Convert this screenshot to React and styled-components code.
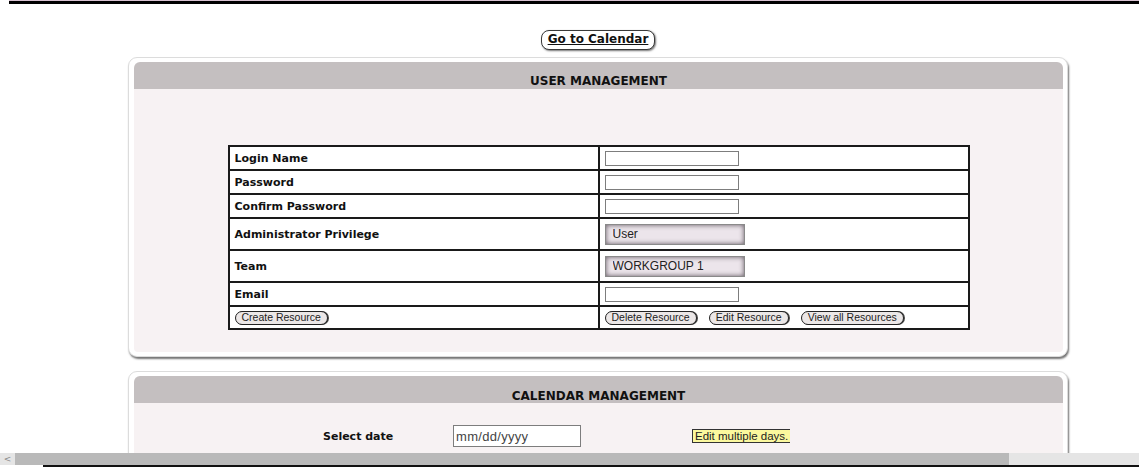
import styled, { createGlobalStyle } from "styled-components";

const GlobalStyle = createGlobalStyle`
  html, body {
    margin: 0;
    padding: 0;
    overflow: hidden;
    background: #ffffff;
  }
  body {
    font-family: "DejaVu Sans", Verdana, sans-serif;
    color: #111111;
  }
`;

const userRows = [
  { label: "Login Name", kind: "text" },
  { label: "Password", kind: "text" },
  { label: "Confirm Password", kind: "text" },
  { label: "Administrator Privilege", kind: "select", options: ["User", "Administrator"] },
  { label: "Team", kind: "select", options: ["WORKGROUP 1", "WORKGROUP 2"] },
  { label: "Email", kind: "text" },
];

export default function App() {
  return (
    <>
      <GlobalStyle />
      <Page>
        <TopRule />
        <CalendarLink href="#">Go to Calendar</CalendarLink>

        <Panel>
          <PanelHeader $pad={12}>USER MANAGEMENT</PanelHeader>
          <PanelBody $top={56} $bottom={22}>
            <FormTable>
              <tbody>
                {userRows.map((row) => (
                  <tr key={row.label}>
                    <LabelCell $tall={row.kind === "select"}>{row.label}</LabelCell>
                    <FieldCell $tall={row.kind === "select"}>
                      {row.kind === "select" ? (
                        <Select defaultValue={row.options[0]}>
                          {row.options.map((o) => (
                            <option key={o}>{o}</option>
                          ))}
                        </Select>
                      ) : (
                        <TextInput type="text" />
                      )}
                    </FieldCell>
                  </tr>
                ))}
                <tr>
                  <ActionCell>
                    <PillButton>Create Resource</PillButton>
                  </ActionCell>
                  <ActionCell>
                    <ButtonGroup>
                      <PillButton>Delete Resource</PillButton>
                      <PillButton>Edit Resource</PillButton>
                      <PillButton>View all Resources</PillButton>
                    </ButtonGroup>
                  </ActionCell>
                </tr>
              </tbody>
            </FormTable>
          </PanelBody>
        </Panel>

        <Panel $gap={14}>
          <PanelHeader $pad={13}>CALENDAR MANAGEMENT</PanelHeader>
          <PanelBody $top={22} $bottom={40}>
            <DateRow>
              <DateLabel>Select date</DateLabel>
              <DateInput type="text" defaultValue="mm/dd/yyyy" />
              <MultiDays>Edit multiple days.</MultiDays>
            </DateRow>
          </PanelBody>
        </Panel>
      </Page>

      <ScrollBar>
        <ScrollArrow>&lt;</ScrollArrow>
        <ScrollThumb />
      </ScrollBar>
      <BottomEdge />
    </>
  );
}

const Page = styled.div`
  width: 1196px;
  padding-bottom: 40px;
`;

const TopRule = styled.div`
  height: 3px;
  margin-left: 9px;
  background: #000000;
  border-top: 1px solid #d8c2d1;
`;

const CalendarLink = styled.a`
  display: block;
  width: fit-content;
  margin: 26px auto 0;
  padding: 0 6px;
  height: 20px;
  box-sizing: border-box;
  line-height: 17px;
  border: 1px solid #3a3a3a;
  border-radius: 8px;
  background: #ffffff;
  box-shadow: 1px 1px 2px rgba(0, 0, 0, 0.55);
  color: #111111;
  font-size: 12px;
  font-weight: bold;
  text-decoration: underline;
`;

const Panel = styled.section`
  width: 940px;
  box-sizing: border-box;
  margin: ${(p) => p.$gap || 7}px auto 0;
  padding: 4px 4px 4px 5px;
  background: #ffffff;
  border: 1px solid #dcdcdc;
  border-radius: 9px;
  box-shadow: 1px 2px 2px rgba(0, 0, 0, 0.55);
`;

const PanelHeader = styled.div`
  height: 27px;
  box-sizing: border-box;
  padding-top: ${(p) => p.$pad}px;
  line-height: 14px;
  overflow: hidden;
  background: #c4bfc0;
  border-radius: 6px 6px 0 0;
  text-align: center;
  font-size: 12px;
  font-weight: bold;
  color: #111111;
`;

const PanelBody = styled.div`
  background: #f7f2f3;
  padding: ${(p) => p.$top}px 0 ${(p) => p.$bottom}px;
  border-radius: 0 0 4px 4px;
`;

const FormTable = styled.table`
  width: 742px;
  margin: 0 auto;
  border-collapse: collapse;
  border: 2px solid #1a1a1a;
  background: #ffffff;
`;

const LabelCell = styled.td`
  width: 50%;
  height: ${(p) => (p.$tall ? 30 : 22)}px;
  padding: 0 5px;
  border: 2px solid #1a1a1a;
  font-size: 11px;
  font-weight: bold;
  color: #111111;
`;

const FieldCell = styled.td`
  height: ${(p) => (p.$tall ? 30 : 22)}px;
  padding: 0 5px;
  border: 2px solid #1a1a1a;
`;

const ActionCell = styled.td`
  height: 21px;
  padding: 0 5px;
  border: 2px solid #1a1a1a;
`;

const TextInput = styled.input`
  display: block;
  width: 134px;
  height: 15px;
  box-sizing: border-box;
  margin: 0;
  border: 1px solid #7d7d7d;
  background: #ffffff;
`;

const Select = styled.select`
  display: block;
  appearance: none;
  width: 140px;
  height: 21px;
  box-sizing: border-box;
  margin: 0;
  padding: 0 0 0 7px;
  border: 1px solid #8a8a8a;
  background: #ece5eb;
  box-shadow: inset 0 0 5px rgba(60, 50, 60, 0.8);
  font-family: "Liberation Sans", Arial, sans-serif;
  font-size: 12px;
  color: #222222;
`;

const ButtonGroup = styled.div`
  display: flex;
  gap: 12px;
`;

const PillButton = styled.button`
  display: block;
  height: 14px;
  box-sizing: border-box;
  margin: 0;
  padding: 0 6px;
  line-height: 11px;
  border: 1px solid #222222;
  border-radius: 7px;
  background: #ebe7e7;
  box-shadow: 1px 0 0 #444444;
  font-family: "Liberation Sans", Arial, sans-serif;
  font-size: 10.5px;
  color: #222222;
  white-space: nowrap;
`;

const DateRow = styled.div`
  display: flex;
  align-items: center;
  padding-left: 189px;
`;

const DateLabel = styled.span`
  width: 130px;
  font-size: 11px;
  font-weight: bold;
  color: #111111;
`;

const DateInput = styled.input`
  width: 128px;
  height: 22px;
  box-sizing: border-box;
  margin: 0;
  padding: 0 2px;
  border: 1px solid #7d7d7d;
  background: #ffffff;
  font-family: "Liberation Sans", Arial, sans-serif;
  font-size: 13px;
  letter-spacing: 0.3px;
  color: #444444;
`;

const MultiDays = styled.span`
  margin-left: 111px;
  height: 14px;
  box-sizing: border-box;
  line-height: 12px;
  padding: 0 2px;
  background: #fbf89e;
  border: 1px solid #333333;
  border-right: none;
  font-family: "Liberation Sans", Arial, sans-serif;
  font-size: 11.5px;
  color: #222222;
`;

const ScrollBar = styled.div`
  position: fixed;
  left: 0;
  right: 0;
  bottom: 2px;
  height: 12px;
  display: flex;
  background: #e5e5e5;
`;

const ScrollArrow = styled.span`
  width: 15px;
  text-align: center;
  font-family: "DejaVu Sans", sans-serif;
  font-size: 9px;
  line-height: 12px;
  color: #8a8a8a;
`;

const ScrollThumb = styled.div`
  width: 994px;
  background: #b9b9b9;
`;

const BottomEdge = styled.div`
  position: fixed;
  left: 43px;
  right: 0;
  bottom: 0;
  height: 2px;
  background: #111111;
`;
